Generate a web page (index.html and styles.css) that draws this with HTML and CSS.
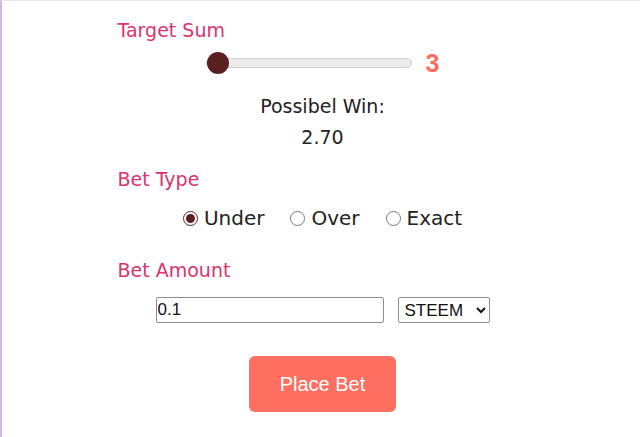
FILE: index.html
```html
<!DOCTYPE html>
<html lang="en">
<head>
  <meta charset="UTF-8" />
  <meta name="viewport" content="width=device-width, initial-scale=1.0" />
  <title>Dice Bet</title>
  <link rel="stylesheet" href="styles.css">
</head>
<body>
  <div class="game">
    <h3 class="label">Target Sum</h3>
    <div class="slider-row">
      <input type="range" class="slider" min="3" max="18" value="3">
      <span class="slider-value">3</span>
    </div>

    <div class="win">
      <p>Possibel Win:</p>
      <p>2.70</p>
    </div>

    <h3 class="label">Bet Type</h3>
    <div class="radio-row">
      <label><input type="radio" name="type" checked> Under</label>
      <label><input type="radio" name="type"> Over</label>
      <label><input type="radio" name="type"> Exact</label>
    </div>

    <h3 class="label">Bet Amount</h3>
    <div class="amount-row">
      <input type="text" class="amount" value="0.1">
      <select class="currency">
        <option>STEEM</option>
        <option>SBD</option>
      </select>
    </div>

    <button class="place-bet">Place Bet</button>
  </div>
</body>
</html>
```

FILE: styles.css
```css
* {
  margin: 0;
  padding: 0;
  box-sizing: border-box;
}

body {
  font-family: 'Comic Sans MS', 'DejaVu Sans', sans-serif;
  background: #fff;
  border-left: 2px solid #cdb8ee;
  border-top: 1px solid #e6e6e6;
  padding-left: 3px;
  min-height: 100vh;
  color: #222;
}

.game {
  width: 410px;
  margin: 0 auto;
  padding-top: 15px;
  display: flex;
  flex-direction: column;
}

.label {
  font-size: 19px;
  font-weight: normal;
  color: #d9346e;
  line-height: 28px;
}

.slider-row {
  display: flex;
  justify-content: center;
  align-items: center;
  gap: 14px;
  margin-top: 4px;
  height: 30px;
}

.slider {
  -webkit-appearance: none;
  appearance: none;
  width: 206px;
  height: 10px;
  background: #ececec;
  border: 1px solid #cfcfcf;
  border-radius: 6px;
  outline: none;
}

.slider::-webkit-slider-thumb {
  -webkit-appearance: none;
  appearance: none;
  width: 22px;
  height: 22px;
  border-radius: 50%;
  background: #5a1f1f;
  cursor: pointer;
}

.slider-value {
  font-family: 'Liberation Sans', Arial, sans-serif;
  font-weight: bold;
  font-size: 25px;
  color: #ff6b5e;
}

.win {
  text-align: center;
  font-size: 19px;
  margin-top: 13px;
  line-height: 31px;
}

.win + .label {
  margin-top: 12px;
}

.radio-row {
  display: flex;
  justify-content: center;
  gap: 26px;
  font-size: 20px;
  margin-top: 11px;
  line-height: 28px;
}

.radio-row label {
  display: flex;
  align-items: center;
  gap: 6px;
}

.radio-row input {
  accent-color: #5a1f1f;
  width: 15px;
  height: 15px;
}

.radio-row + .label {
  margin-top: 24px;
}

.amount-row {
  display: flex;
  justify-content: center;
  gap: 14px;
  margin-top: 13px;
}

.amount,
.currency {
  font-family: 'Liberation Sans', Arial, sans-serif;
  font-size: 17px;
  height: 26px;
  border: 1px solid #8f8f8f;
  border-radius: 2px;
  background: #fff;
  color: #111;
}

.amount {
  width: 228px;
  padding: 0 1px;
}

.currency {
  width: 92px;
  padding: 0 2px;
}

.place-bet {
  align-self: center;
  margin-top: 33px;
  width: 147px;
  height: 56px;
  background: #ff6f61;
  color: #fff;
  border: none;
  border-radius: 6px;
  font-family: 'Liberation Sans', Arial, sans-serif;
  font-size: 20px;
  cursor: pointer;
}
```
